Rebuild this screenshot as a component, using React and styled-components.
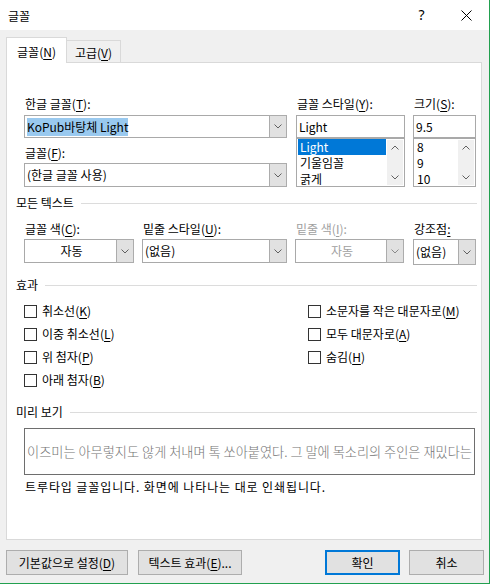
import React from 'react';
import styled, { createGlobalStyle } from 'styled-components';

const FONT = `"Noto Sans CJK KR", "Noto Sans", sans-serif`;

const Global = createGlobalStyle`
  html, body { margin: 0; padding: 0; background: #ffffff; }
  body { font-family: ${FONT}; font-size: 12px; line-height: 16px; color: #000; }
  * { box-sizing: border-box; }
  u { text-decoration-thickness: 1px; text-underline-offset: 2px; }
`;

const Window = styled.div`
  width: 490px;
  height: 584px;
  border-right: 1px solid #22a04f;
  border-bottom: 1px solid #22a04f;
  background: #f0f0f0;
  display: flex;
  flex-direction: column;
`;

const TitleBar = styled.div`
  height: 30px;
  flex: none;
  background: #fff;
  display: flex;
  align-items: center;
`;
const Title = styled.div`
  flex: 1;
  padding-left: 8px;
  padding-top: 1px;
`;
const TitleButton = styled.div`
  width: 45px;
  height: 30px;
  display: flex;
  align-items: center;
  justify-content: center;
  font-family: "Noto Sans", sans-serif;
  font-size: 14px;
`;

const Body = styled.div`
  flex: 1;
  display: flex;
  flex-direction: column;
  padding: 7px 0 0 6px;
`;

const TabRow = styled.div`
  display: flex;
  align-items: flex-end;
  height: 25px;
`;
const Tab = styled.div`
  position: relative;
  width: ${p => p.$w}px;
  height: ${p => (p.$active ? 26 : 22)}px;
  margin-bottom: ${p => (p.$active ? -1 : 0)}px;
  margin-left: ${p => (p.$active ? 0 : -1)}px;
  z-index: ${p => (p.$active ? 1 : 0)};
  background: ${p => (p.$active ? '#ffffff' : '#f0f0f0')};
  border: 1px solid #d9d9d9;
  border-bottom: none;
  display: flex;
  justify-content: center;
  align-items: center;
  padding-top: 2px;
`;

const Panel = styled.div`
  width: 476px;
  height: 478px;
  background: #fff;
  border: 1px solid #d9d9d9;
  padding: 33px 4px 0 9px;
  display: flex;
  flex-direction: column;
`;

const Row = styled.div`
  display: flex;
  align-items: flex-start;
  margin-left: 8px;
  margin-top: ${p => p.$mt || 0}px;
`;
const Field = styled.div`
  width: ${p => p.$w}px;
  margin-left: ${p => p.$ml || 0}px;
  display: flex;
  flex-direction: column;
`;
const Label = styled.div`
  height: 16px;
  white-space: nowrap;
  padding-left: 1px;
  color: ${p => (p.$disabled ? '#a0a0a0' : '#000')};
  margin-top: ${p => p.$mt || 0}px;
  margin-bottom: ${p => (p.$mb ?? 3)}px;
`;

const Combo = styled.div`
  height: ${p => p.$h || 24}px;
  border: 1px solid #a9a9a9;
  background: #fff;
  display: flex;
`;
const ComboText = styled.div`
  flex: 1;
  display: flex;
  align-items: center;
  justify-content: ${p => (p.$center ? 'center' : 'flex-start')};
  padding-left: 2px;
  white-space: nowrap;
  overflow: hidden;
  color: ${p => (p.$disabled ? '#a0a0a0' : '#000')};
`;
const Selected = styled.span`
  display: inline-block;
  background: #99c9ef;
  line-height: 18px;
  height: 18px;
`;
const DropButton = styled.div`
  width: 18px;
  margin: -1px -1px -1px 0;
  background: #e1e1e1;
  border: 1px solid #acacac;
  display: flex;
  align-items: center;
  justify-content: center;
`;

const TextBox = styled.div`
  height: 23px;
  border: 1px solid #a9a9a9;
  background: #fff;
  display: flex;
  align-items: center;
  padding-left: 2px;
`;

const ListBox = styled.div`
  height: 49px;
  border: 1px solid #a9a9a9;
  background: #fff;
  display: flex;
  overflow: hidden;
`;
const ListItems = styled.div`
  flex: 1;
  padding: 0 1px;
  overflow: hidden;
`;
const ListItem = styled.div`
  height: 16px;
  line-height: 16px;
  padding-left: 2px;
  white-space: nowrap;
  background: ${p => (p.$selected ? '#0078d7' : 'transparent')};
  color: ${p => (p.$selected ? '#fff' : '#000')};
`;
const ScrollBar = styled.div`
  width: 16px;
  margin: 1px 1px 1px 0;
  background: #f0f0f0;
  display: flex;
  flex-direction: column;
  justify-content: space-between;
  align-items: center;
  padding: 5px 0 5px;
`;

const SectionHeader = styled.div`
  display: flex;
  align-items: center;
  height: 16px;
  margin-top: ${p => p.$mt || 0}px;
  white-space: nowrap;
`;
const HeaderLine = styled.div`
  flex: 1;
  height: 1px;
  background: #dcdcdc;
  margin-left: 7px;
`;

const CheckGrid = styled.div`
  display: grid;
  grid-template-columns: 284px 1fr;
  grid-template-rows: repeat(4, 23px);
  grid-auto-flow: column;
  margin: 10px 0 0 8px;
`;
const CheckItem = styled.label`
  display: flex;
  align-items: flex-start;
  height: 16px;
  white-space: nowrap;
`;
const Box = styled.span`
  width: 13px;
  height: 13px;
  margin-top: 2px;
  margin-right: 5px;
  border: 1px solid #333;
  background: #fff;
  flex: none;
`;

const Preview = styled.div`
  margin: 8px 0 0 8px;
  width: 451px;
  height: 47px;
  border: 1px solid #6e6e6e;
  display: flex;
  align-items: center;
  padding-left: 2px;
  overflow: hidden;
  white-space: nowrap;
  font-size: 13.2px;
  font-weight: 300;
  color: #747474;
`;
const Description = styled.div`
  margin: 4px 0 0 9px;
  height: 16px;
  white-space: nowrap;
  letter-spacing: 0.9px;
`;

const ButtonRow = styled.div`
  width: 478px;
  margin-top: 10px;
  display: flex;
  align-items: center;
`;
const Spacer = styled.div`
  flex: 1;
`;
const Button = styled.div`
  width: ${p => p.$w}px;
  height: 25px;
  margin-left: ${p => p.$ml || 0}px;
  background: #e1e1e1;
  border: ${p => (p.$primary ? '2px solid #0078d7' : '1px solid #adadad')};
  display: flex;
  align-items: center;
  justify-content: center;
  white-space: nowrap;
`;

const Chevron = ({ up, color = '#606060' }) => (
  <svg width="8" height="5" viewBox="0 0 8 5" style={{ display: 'block' }}>
    <polyline
      points={up ? '0.5,4.5 4,1 7.5,4.5' : '0.5,0.5 4,4 7.5,0.5'}
      fill="none"
      stroke={color}
      strokeWidth="1"
    />
  </svg>
);

const CloseIcon = () => (
  <svg width="11" height="11" viewBox="0 0 11 11" style={{ display: 'block' }}>
    <path d="M0.5 0.5 L10.5 10.5 M10.5 0.5 L0.5 10.5" stroke="#000" strokeWidth="1" fill="none" />
  </svg>
);

const Drop = ({ disabled }) => (
  <DropButton>
    <Chevron color={disabled ? '#8a8a8a' : '#606060'} />
  </DropButton>
);

const Scroll = () => (
  <ScrollBar>
    <Chevron up />
    <Chevron />
  </ScrollBar>
);

const leftChecks = [
  ['취소선', 'K'],
  ['이중 취소선', 'L'],
  ['위 첨자', 'P'],
  ['아래 첨자', 'B'],
];
const rightChecks = [
  ['소문자를 작은 대문자로', 'M'],
  ['모두 대문자로', 'A'],
  ['숨김', 'H'],
];

export default function App() {
  return (
    <>
      <Global />
      <Window>
        <TitleBar>
          <Title>글꼴</Title>
          <TitleButton>?</TitleButton>
          <TitleButton>
            <CloseIcon />
          </TitleButton>
        </TitleBar>
        <Body>
          <TabRow>
            <Tab $active $w={61}>글꼴(<u>N</u>)</Tab>
            <Tab $w={55}>고급(<u>V</u>)</Tab>
          </TabRow>
          <Panel>
            <Row>
              <Field $w={263}>
                <Label>한글 글꼴(<u>T</u>):</Label>
                <Combo $h={23}>
                  <ComboText>
                    <Selected>KoPub바탕체 Light</Selected>
                  </ComboText>
                  <Drop />
                </Combo>
                <Label $mt={7} $mb={2}>글꼴(<u>F</u>):</Label>
                <Combo $h={24}>
                  <ComboText>(한글 글꼴 사용)</ComboText>
                  <Drop />
                </Combo>
              </Field>
              <Field $w={109} $ml={9}>
                <Label>글꼴 스타일(<u>Y</u>):</Label>
                <TextBox>Light</TextBox>
                <ListBox>
                  <ListItems>
                    <ListItem $selected>Light</ListItem>
                    <ListItem>기울임꼴</ListItem>
                    <ListItem>굵게</ListItem>
                  </ListItems>
                  <Scroll />
                </ListBox>
              </Field>
              <Field $w={63} $ml={8}>
                <Label>크기(<u>S</u>):</Label>
                <TextBox>9.5</TextBox>
                <ListBox>
                  <ListItems>
                    <ListItem>8</ListItem>
                    <ListItem>9</ListItem>
                    <ListItem>10</ListItem>
                  </ListItems>
                  <Scroll />
                </ListBox>
              </Field>
            </Row>

            <SectionHeader $mt={8}>
              모든 텍스트
              <HeaderLine />
            </SectionHeader>

            <Row $mt={10}>
              <Field $w={110}>
                <Label $mb={2}>글꼴 색(<u>C</u>):</Label>
                <Combo $h={24}>
                  <ComboText $center>자동</ComboText>
                  <Drop />
                </Combo>
              </Field>
              <Field $w={145} $ml={8}>
                <Label $mb={2}>밑줄 스타일(<u>U</u>):</Label>
                <Combo $h={24}>
                  <ComboText>(없음)</ComboText>
                  <Drop />
                </Combo>
              </Field>
              <Field $w={109} $ml={8}>
                <Label $mb={2} $disabled>밑줄 색(<u>I</u>):</Label>
                <Combo $h={24}>
                  <ComboText $center $disabled>자동</ComboText>
                  <Drop disabled />
                </Combo>
              </Field>
              <Field $w={63} $ml={9}>
                <Label $mb={2}>강조점<u>:</u></Label>
                <Combo $h={26}>
                  <ComboText>(없음)</ComboText>
                  <Drop />
                </Combo>
              </Field>
            </Row>

            <SectionHeader $mt={12}>
              효과
              <HeaderLine />
            </SectionHeader>

            <CheckGrid>
              {leftChecks.map(([t, k]) => (
                <CheckItem key={k}>
                  <Box />
                  {t}(<u>{k}</u>)
                </CheckItem>
              ))}
              {rightChecks.map(([t, k]) => (
                <CheckItem key={k}>
                  <Box />
                  {t}(<u>{k}</u>)
                </CheckItem>
              ))}
            </CheckGrid>

            <SectionHeader $mt={9}>
              미리 보기
              <HeaderLine />
            </SectionHeader>

            <Preview>
              이즈미는 아무렇지도 않게 처내며 톡 쏘아붙였다. 그 말에 목소리의 주인은 재밌다는
            </Preview>
            <Description>트루타입 글꼴입니다. 화면에 나타나는 대로 인쇄됩니다.</Description>
          </Panel>

          <ButtonRow>
            <Button $w={122}>기본값으로 설정(<u>D</u>)</Button>
            <Button $w={104} $ml={10}>텍스트 효과(<u>E</u>)...</Button>
            <Spacer />
            <Button $w={75} $primary>확인</Button>
            <Button $w={75} $ml={9}>취소</Button>
          </ButtonRow>
        </Body>
      </Window>
    </>
  );
}
